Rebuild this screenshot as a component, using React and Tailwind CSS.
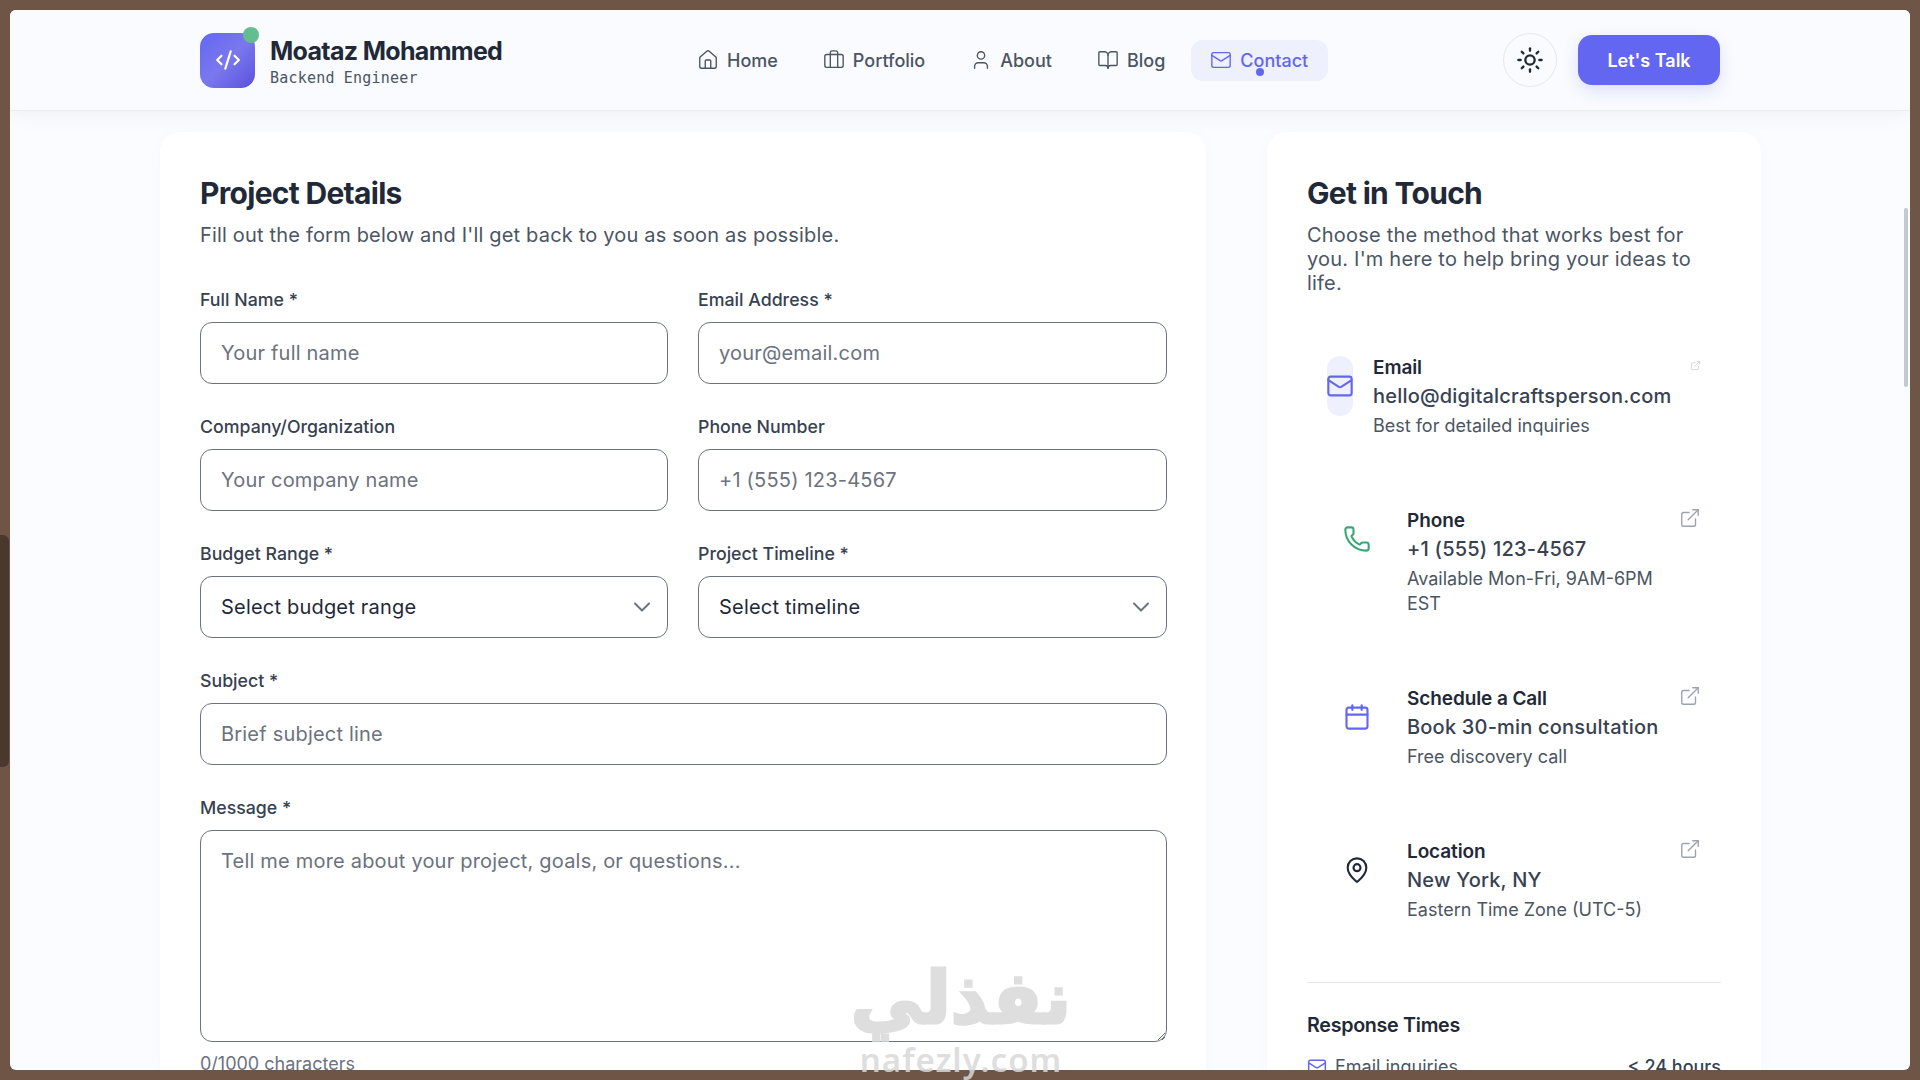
import React from "react";
import { House, Briefcase, User, BookOpen, Mail, Sun, Phone, Calendar, MapPin, ExternalLink, CodeXml, ChevronDown } from "lucide-react";

const inter = { fontFamily: '"Inter", "Noto Sans", sans-serif' };

function NavItem({ Icon, label, active }) {
  return (
    <a className={"relative flex h-[41px] items-center gap-[8px] rounded-[12px] pl-[19px] pr-[20px] text-[18px] font-medium " + (active ? "bg-[#eef0fd] text-[#6366f1]" : "text-[#4b5563]")}>
      <Icon size={22} strokeWidth={1.5} />
      <span>{label}</span>
      {active && <span className="absolute left-[65px] top-[28px] h-[8px] w-[8px] rounded-full bg-[#6366f1]" />}
    </a>
  );
}

function Field({ label, children, className = "" }) {
  return (
    <div className={"flex flex-col gap-[10px] " + className}>
      <label className="text-[17.75px] font-medium leading-[24px] text-[#374151]">{label}</label>
      {children}
    </div>
  );
}

const inputCls = "h-[62px] w-full rounded-[12px] border border-[#6b7280] bg-white px-[20px] text-[20px] text-[#1f2937] placeholder:text-[#6b7280] outline-none tracking-[0.2px]";

function TextInput({ placeholder }) {
  return <input className={inputCls} placeholder={placeholder} readOnly />;
}

function SelectBox({ text }) {
  return (
    <div className="relative">
      <select className={inputCls + " appearance-none"} defaultValue={text}>
        <option>{text}</option>
      </select>
      <ChevronDown size={28} strokeWidth={1.7} className="pointer-events-none absolute right-[12px] top-[17px] text-[#6b7280]" />
    </div>
  );
}

function ContactItem({ Icon, color, title, value, desc, first }) {
  return (
    <div className="flex items-start gap-[20px] p-[20px]">
      <div className={"flex h-[60px] shrink-0 items-center justify-center rounded-[14px] " + (first ? "w-[26px] bg-[#eef0fd]" : "w-[60px]")}>
        <Icon size={28} strokeWidth={1.8} className={"shrink-0 " + color} />
      </div>
      <div className="min-w-0 flex-1">
        <div className="text-[19px] font-semibold leading-[24px] tracking-[-0.1px] text-[#1f2937]">{title}</div>
        <div className="mt-[4px] text-[20px] font-medium leading-[24px] tracking-[0.2px] text-[#374151]">{value}</div>
        <div className="mt-[5px] text-[18px] leading-[25px] text-[#4b5563]">{desc}</div>
      </div>
      {first ? (
        <ExternalLink size={11} strokeWidth={1.6} className="mt-[4px] shrink-0 text-[#c4c7cc]" />
      ) : (
        <ExternalLink size={22} strokeWidth={1.5} className="-ml-[5px] -mt-[2px] shrink-0 text-[#9ca3af]" />
      )}
    </div>
  );
}

export default function App() {
  return (
    <div className="relative h-screen overflow-hidden bg-[#6f5546] pb-[10px] pl-[10px] pr-[10px] pt-[10px]" style={inter}>
      <div className="absolute left-0 top-[535px] h-[232px] w-[9px] rounded-r-[6px] bg-[#4a382e]" />
      <div className="relative h-full overflow-hidden rounded-[6px] bg-[#fbfcff]">
        <header className="flex h-[101px] justify-center border-b border-[#e8ebef] bg-[#f9fbfe] shadow-[0_4px_20px_rgba(0,0,0,0.05)]">
          <div className="flex w-[1520px] items-center">
            <div className="flex w-[478px] items-center gap-[15px]">
              <div className="relative flex h-[55px] w-[55px] items-center justify-center rounded-[14px] bg-linear-135 from-[#6366f1] via-[#7b78ee] to-[#5a50dc] text-white">
                <CodeXml size={26} strokeWidth={2} />
                <span className="absolute right-[-4px] top-[-6px] h-[16px] w-[16px] rounded-full bg-[#64bd8f]" />
              </div>
              <div>
                <div className="mt-[3px] text-[25px] font-bold leading-[30px] tracking-[-0.68px] text-[#1f2937]">Moataz Mohammed</div>
                <div className="mt-[2px] text-[15px] leading-[20px] tracking-[0.2px] text-[#4b5563]" style={{ fontFamily: '"DejaVu Sans Mono", monospace' }}>Backend Engineer</div>
              </div>
            </div>
            <nav className="flex items-center gap-[6px]">
              <NavItem Icon={House} label="Home" />
              <NavItem Icon={Briefcase} label="Portfolio" />
              <NavItem Icon={User} label="About" />
              <NavItem Icon={BookOpen} label="Blog" />
              <NavItem Icon={Mail} label="Contact" active />
            </nav>
            <div className="ml-auto flex items-center gap-[21px]">
              <button className="flex h-[54px] w-[54px] items-center justify-center rounded-full border border-[#e5e7eb] text-[#1f2937]">
                <Sun size={28} strokeWidth={2} />
              </button>
              <button className="h-[50px] w-[142px] rounded-[14px] bg-[#6366f1] text-[18px] font-semibold text-white shadow-[0_6px_16px_rgba(99,102,241,0.18)]">Let's Talk</button>
            </div>
          </div>
        </header>

        <main className="mx-auto grid w-[1600px] grid-cols-[1046px_494px] gap-[61px] pt-[21px]">
          <section className="rounded-t-[20px] bg-white px-[40px] pt-[43px] shadow-[0_0_20px_rgba(0,0,0,0.02)]">
            <h2 className="text-[30px] font-bold leading-[36px] tracking-[-0.7px] text-[#1f2937]">Project Details</h2>
            <p className="mt-[9px] text-[20px] leading-[30px] tracking-[0.18px] text-[#4b5563]">Fill out the form below and I'll get back to you as soon as possible.</p>
            <div className="mt-[38px] grid grid-cols-[468px_469px] gap-x-[30px] gap-y-[31px]">
              <Field label="Full Name *"><TextInput placeholder="Your full name" /></Field>
              <Field label="Email Address *"><TextInput placeholder="your@email.com" /></Field>
              <Field label="Company/Organization"><TextInput placeholder="Your company name" /></Field>
              <Field label="Phone Number"><TextInput placeholder="+1 (555) 123-4567" /></Field>
              <Field label="Budget Range *"><SelectBox text="Select budget range" /></Field>
              <Field label="Project Timeline *"><SelectBox text="Select timeline" /></Field>
              <Field label="Subject *" className="col-span-2"><TextInput placeholder="Brief subject line" /></Field>
              <Field label="Message *" className="col-span-2">
                <textarea readOnly className="h-[212px] w-full rounded-[12px] border border-[#6b7280] bg-white px-[20px] py-[15px] text-[20px] leading-[30px] tracking-[0.2px] placeholder:text-[#6b7280] outline-none" placeholder="Tell me more about your project, goals, or questions..." />
              </Field>
            </div>
            <div className="mt-[10px] text-[18px] leading-[24px] text-[#6b7280]">0/1000 characters</div>
          </section>

          <aside className="rounded-t-[20px] bg-white px-[40px] pt-[43px] shadow-[0_0_20px_rgba(0,0,0,0.02)]">
            <h2 className="text-[30px] font-bold leading-[36px] tracking-[-0.7px] text-[#1f2937]">Get in Touch</h2>
            <p className="mt-[12px] text-[20px] leading-[24px] tracking-[0.2px] text-[#4b5563]">Choose the method that works best for you. I'm here to help bring your ideas to life.</p>
            <div className="mt-[41px] flex flex-col gap-[31px]">
              <ContactItem first Icon={Mail} color="text-[#6366f1]" title="Email" value="hello@digitalcraftsperson.com" desc="Best for detailed inquiries" />
              <ContactItem Icon={Phone} color="text-[#3aa676]" title="Phone" value="+1 (555) 123-4567" desc="Available Mon-Fri, 9AM-6PM EST" />
              <ContactItem Icon={Calendar} color="text-[#6366f1]" title="Schedule a Call" value="Book 30-min consultation" desc="Free discovery call" />
              <ContactItem Icon={MapPin} color="text-[#1f2937]" title="Location" value="New York, NY" desc="Eastern Time Zone (UTC-5)" />
            </div>
            <div className="mt-[40px] border-t border-[#e5e7eb] pt-[28px]">
              <h3 className="text-[19.7px] font-semibold leading-[28px] tracking-[-0.3px] text-[#1f2937]">Response Times</h3>
              <div className="mt-[16px] flex items-center justify-between text-[18px] leading-[24px] text-[#4b5563]">
                <span className="flex items-center gap-[8px]"><Mail size={20} strokeWidth={1.8} className="text-[#6366f1]" />Email inquiries</span>
                <span className="font-medium text-[#374151]">&lt; 24 hours</span>
              </div>
            </div>
          </aside>
        </main>

        <div className="absolute right-[2px] top-[198px] h-[179px] w-[4px] rounded-full bg-[#c5c8cc]" />
      </div>

      <div className="pointer-events-none absolute left-[846px] top-[954px] w-[230px] text-center text-[#d8d8d8]/85">
        <div className="text-[72px] font-bold leading-[88px] [-webkit-text-stroke:3px_#dedede]" dir="rtl" style={{ fontFamily: '"DejaVu Sans", sans-serif' }}>نفذلي</div>
        <div className="text-[33px] font-semibold leading-[36px] tracking-[1px]" style={{ fontFamily: '"Noto Sans", sans-serif' }}>nafezly.com</div>
      </div>
    </div>
  );
}
